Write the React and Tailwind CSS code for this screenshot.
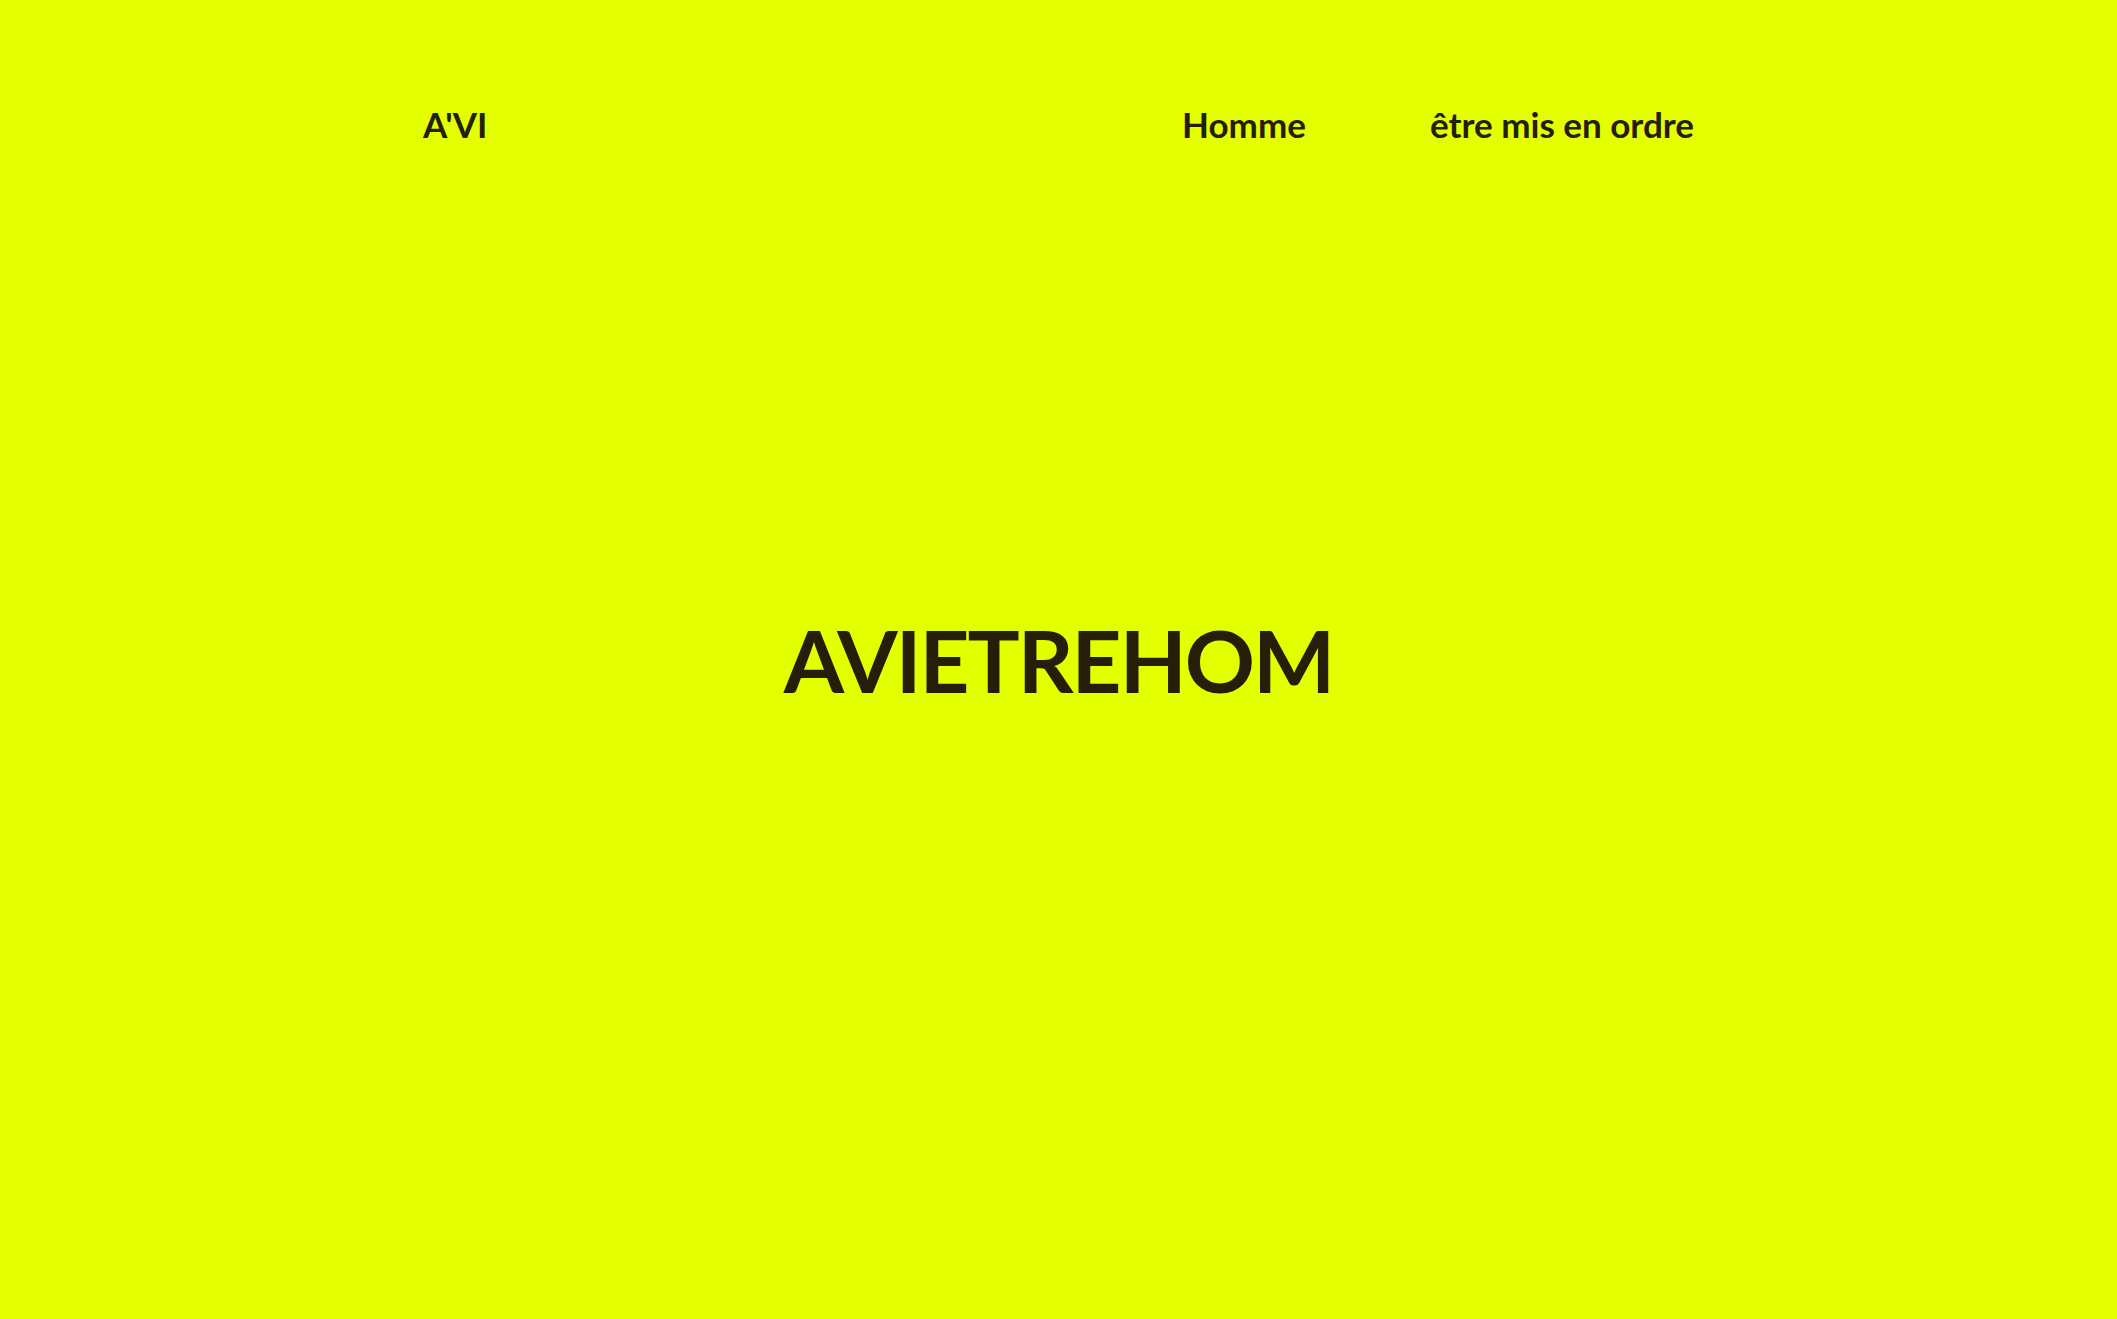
import React from 'react';

const links = ['Homme', 'être mis en ordre'];

const App = () => {
  return (
    <div className="h-screen flex flex-col bg-[#e3ff00] text-[#251e08] font-['Lato','Liberation_Sans',sans-serif] overflow-hidden">
      <header className="h-[200px] shrink-0 pt-[103px]">
        <nav className="w-[1271px] mx-auto flex items-center justify-between text-[35px] font-bold leading-[42px]">
          <a href="#">A'VI</a>
          <ul className="flex items-center gap-[124px]">
            {links.map((l) => (
              <li key={l}>
                <a href="#">{l}</a>
              </li>
            ))}
          </ul>
        </nav>
      </header>

      <main className="flex-1 flex items-center justify-center">
        <h1 className="text-[87px] font-bold leading-none tracking-[-2px]">AVIETREHOM</h1>
      </main>

      <div className="h-[200px] shrink-0" />
    </div>
  );
};

export default App;
